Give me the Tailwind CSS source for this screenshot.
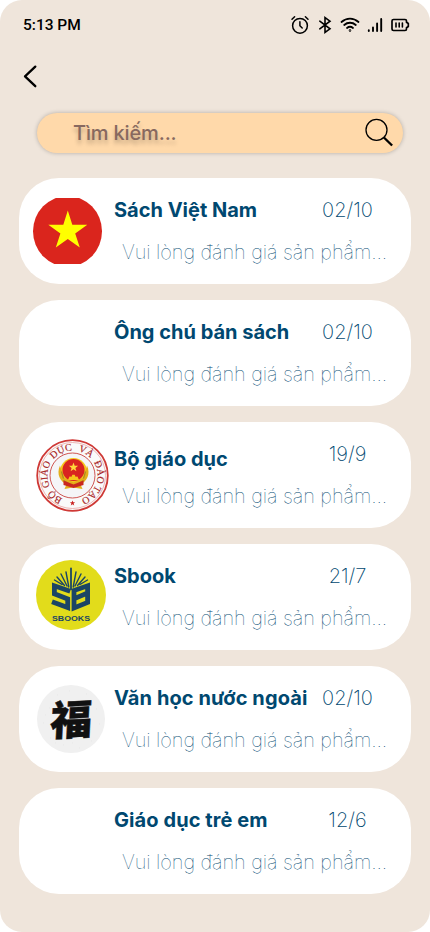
<!DOCTYPE html>
<html lang="vi">
<head>
<meta charset="utf-8">
<meta name="viewport" content="width=device-width, initial-scale=1">
<title>Tin nhắn</title>
<script src="https://cdn.jsdelivr.net/npm/@tailwindcss/browser@4"></script>
</head>
<body class="bg-white">
<main class="flex h-[932px] w-[430px] flex-col overflow-hidden rounded-[22px] bg-[#efe5db] font-['Inter',sans-serif]">
  <header class="flex h-[49px] shrink-0 items-center justify-between pl-[23px] pr-[20px]">
    <span class="font-['Roboto',sans-serif] text-[15.5px] font-medium leading-5 text-black">5:13 PM</span>
    <div class="flex items-center gap-[5px]">
      <svg class="h-5 w-5" viewBox="0 0 20 20" fill="none" stroke="#000" stroke-width="1.5" stroke-linecap="round" stroke-linejoin="round"><circle cx="10" cy="10.8" r="7.4"/><path d="M9.9 6.8v4l2.3 2.2M2 4.2l2.6-2.5M18 4.2l-2.6-2.5"/></svg>
      <svg class="h-5 w-5" viewBox="0 0 20 20" fill="none" stroke="#000" stroke-width="1.6" stroke-linecap="round" stroke-linejoin="miter"><path d="M4.800 6.200l10.200 7.600-5 3.700V2.500l5 3.700L4.800 13.800"/></svg>
      <svg class="h-5 w-5" viewBox="0 0 20 20" fill="none" stroke="#000" stroke-width="1.8" stroke-linecap="round"><path d="M1.500 7c5-4.500 12-4.500 17 0M4.200 10c3.400-3 8.200-3 11.600 0M7 13c1.800-1.500 4.200-1.500 6 0"/><circle cx="10" cy="15.500" r=".4"/></svg>
      <svg class="h-5 w-5" viewBox="0 0 20 20" fill="none" stroke="#000" stroke-width="1.900" stroke-linecap="round"><path d="M3.800 15.200v.8M8 12.500v3.500M12.100 8.500v7.500M16.200 4v12"/></svg>
      <svg class="h-5 w-5" viewBox="0 0 20 20" fill="none" stroke="#000" stroke-width="1.7" stroke-linecap="round" stroke-linejoin="round"><path d="M3.500 4.500H15Q16.500 4.500 16.500 6V7.200L18.300 8.500V11.500L16.500 12.800V14Q16.500 15.500 15 15.500H3.500Q2 15.500 2 14V6Q2 4.500 3.500 4.500Z"/><path d="M6 8v4M9.200 8v4M12.400 8v4" stroke-width="1.6"/></svg>
    </div>
  </header>

  <nav class="flex h-[64px] shrink-0 items-start pl-[23px] pt-[15px]">
    <button aria-label="Quay lại"><svg class="h-6 w-4" viewBox="0 0 16 24" fill="none" stroke="#000" stroke-width="2.300" stroke-linecap="round" stroke-linejoin="round"><path d="M12.300 2.600L2 12.300L12.300 22.200"/></svg></button>
  </nav>

  <div class="ml-[37px] flex h-10 w-[366px] shrink-0 items-center justify-between rounded-full bg-[#ffd9aa] pl-[36px] pr-[8px] shadow-[0_0_4px_rgba(0,0,0,0.25)]">
    <span class="text-[20px] font-medium leading-6 tracking-[-0.15px] text-[#87695f] [text-shadow:0_4px_4px_rgba(0,0,0,0.25)]">Tìm kiếm...</span>
    <svg class="h-[30px] w-[30px]" viewBox="0 0 30 30" fill="none" stroke="#000"><circle cx="11.500" cy="11.900" r="10.500" stroke-width="1.300"/><path d="M18.900 19.500L27.100 27.500" stroke-width="2.400"/></svg>
  </div>

  <section class="ml-[19px] mt-[25px] flex w-[392px] flex-col gap-4 text-[#004870]">
    <article class="flex h-[106px] rounded-[40px] bg-white">
      <div class="w-[95px] shrink-0 pl-[14px] pt-[20px]">
        <svg class="h-[66px] w-[69px]" viewBox="0 0 69 66"><ellipse cx="34.500" cy="33.300" rx="34.500" ry="35.300" fill="#da251d"/><path d="M34.800 12.500L39.300 26.700H54.300L42.200 35.400L46.800 49.600L34.800 40.900L22.800 49.600L27.400 35.400L15.300 26.700H30.300Z" fill="#ff0"/></svg>
      </div>
      <div class="pt-[20px] text-[20px] leading-6">
        <div class="grid grid-cols-[198px_71px]"><h2 class="whitespace-nowrap font-bold">Sách Việt Nam</h2><time class="text-center font-extralight">02/10</time></div>
        <p class="mt-[18px] whitespace-nowrap pl-2 font-thin tracking-[-0.08px]">Vui lòng đánh giá sản phẩm...</p>
      </div>
    </article>

    <article class="flex h-[106px] rounded-[40px] bg-white">
      <div class="w-[95px] shrink-0"></div>
      <div class="pt-[20px] text-[20px] leading-6">
        <div class="grid grid-cols-[198px_71px]"><h2 class="whitespace-nowrap font-bold">Ông chú bán sách</h2><time class="text-center font-extralight">02/10</time></div>
        <p class="mt-[18px] whitespace-nowrap pl-2 font-thin tracking-[-0.08px]">Vui lòng đánh giá sản phẩm...</p>
      </div>
    </article>

    <article class="flex h-[106px] rounded-[40px] bg-white">
      <div class="w-[95px] shrink-0 pl-[17px] pt-[17px]">
        <svg class="h-[73px] w-[73px]" viewBox="0 0 73 73">
          <circle cx="36.500" cy="36.500" r="35.300" fill="#fafafa" stroke="#cf3936" stroke-width="1.800"/>
          <circle cx="36.500" cy="36.500" r="33" fill="none" stroke="#e79a98" stroke-width=".7"/>
          <circle cx="36.500" cy="36.500" r="22.500" fill="#f5f5f7" stroke="#cf5653" stroke-width="1"/>
          <path id="seal-arc" d="M36.500 61.500A25 25 0 0 1 36.500 11.500A25 25 0 0 1 36.500 61.500" fill="none"/>
          <g fill="#a82424" stroke="#a82424" stroke-width=".15" font-family="'Liberation Serif',serif" font-size="10" text-anchor="middle">
            <text><textPath href="#seal-arc" startOffset="17">BỘ</textPath></text>
            <text><textPath href="#seal-arc" startOffset="40">GIÁO</textPath></text>
            <text><textPath href="#seal-arc" startOffset="67">DỤC</textPath></text>
            <text><textPath href="#seal-arc" startOffset="91">VÀ</textPath></text>
            <text><textPath href="#seal-arc" startOffset="114">ĐÀO</textPath></text>
            <text><textPath href="#seal-arc" startOffset="137">TẠO</textPath></text>
          </g>
          <path d="M36.500 61.500l.7 1.800h1.900l-1.500 1.200.6 1.900-1.700-1.100-1.700 1.100.6-1.900-1.500-1.200h1.900z" fill="#c9211f"/>
          <g transform="translate(.5 -.5)">
          <circle cx="37" cy="33" r="13.500" fill="#f6c51c"/>
          <path d="M23.500 27C19.500 36 24 43 30 46L28 50.500 36.500 49 46 50.500 44 46C50 43 54.500 36 50.500 27L47 39 37 44 27 39Z" fill="#e3ae1b"/>
          <path d="M25 33l2 7M49 33l-2 7M27 42l5 3M47 42l-5 3" stroke="#a98a22" stroke-width="1.200"/>
          <circle cx="37" cy="31.500" r="11" fill="#d92420"/>
          <path d="M27 42l10 4 10-4v4.500l-10 3-10-3z" fill="#c92820"/>
          <path d="M31.500 41.500l1.500-3.500 2 .3.800-2h2.400l.8 2 2-.3 1.500 3.500z" fill="#f6c51c"/>
          <path d="M37 24l1.200 3.300h3.400l-2.700 2.100 1 3.300-2.900-2-2.900 2 1-3.300-2.700-2.100h3.400z" fill="#ffd83b"/>
          </g>
        </svg>
      </div>
      <div class="pt-[20px] text-[20px] leading-6">
        <div class="grid h-6 grid-cols-[198px_71px]"><h2 class="mt-[5px] whitespace-nowrap font-bold">Bộ giáo dục</h2><time class="text-center font-extralight">19/9</time></div>
        <p class="mt-[18px] whitespace-nowrap pl-2 font-thin tracking-[-0.08px]">Vui lòng đánh giá sản phẩm...</p>
      </div>
    </article>

    <article class="flex h-[106px] rounded-[40px] bg-white">
      <div class="w-[95px] shrink-0 pl-[17px] pt-[16px]">
        <svg class="h-[70px] w-[70px]" viewBox="0 0 70 70">
          <circle cx="35" cy="35" r="35" fill="#e2dc1b"/>
          <g fill="none" stroke="#1b4565" stroke-linecap="round">
            <path d="M35 8.500V29" stroke-width="1.800"/>
            <path d="M32.800 27L30 12M37.200 27L40 12M31 26L25 14M39 26L45 14M28.500 25.500L21 17M41.500 25.500L49 17M26 24.500L18.500 20M44 24.500L51.500 20" stroke-width="1.400"/>
          </g>
          <g fill="none" stroke="#1b4565" stroke-width="4.800" stroke-linejoin="miter">
            <path d="M34.200 31.200L18.400 25.800V33.800L31.700 39V47.500L16 41.800"/>
            <path d="M35.800 31.200L51.600 25.800V33L38 38.800V48L51.600 42.500V34.500M38 31V48"/>
          </g>
          <text x="35" y="60.500" text-anchor="middle" textLength="38" lengthAdjust="spacingAndGlyphs" font-family="'Liberation Sans',sans-serif" font-weight="700" font-size="7.500" fill="#1b4565">SBOOKS</text>
        </svg>
      </div>
      <div class="pt-[20px] text-[20px] leading-6">
        <div class="grid grid-cols-[198px_71px]"><h2 class="whitespace-nowrap font-bold">Sbook</h2><time class="text-center font-extralight">21/7</time></div>
        <p class="mt-[18px] whitespace-nowrap pl-2 font-thin tracking-[-0.08px]">Vui lòng đánh giá sản phẩm...</p>
      </div>
    </article>

    <article class="flex h-[106px] rounded-[40px] bg-white">
      <div class="w-[95px] shrink-0 pl-[18px] pt-[19px]">
        <svg class="h-[68px] w-[68px]" viewBox="0 0 68 68">
          <circle cx="34" cy="34" r="34" fill="#f0f0f0"/>
          <path d="M12 23h.5M20 10h.5M32 6h.5M49 9h.5M59 24h.5M62 39h.5M54 56h.5M42 63h.5M26 60h.5M13 53h.5M6 38h.5M8 30h.5M24 17h.5M55 18h.5M18 58h.5M35 58h.5" stroke="#dedede"/>
          <text transform="matrix(1 -.05 -.05 .98 12.500 51)" font-family="'Noto Sans CJK TC',sans-serif" font-weight="900" font-size="42" fill="#111" stroke="#111" stroke-width=".5" stroke-linejoin="round">福</text>
        </svg>
      </div>
      <div class="pt-[20px] text-[20px] leading-6">
        <div class="grid grid-cols-[198px_71px]"><h2 class="whitespace-nowrap font-bold tracking-[0.1px]">Văn học nước ngoài</h2><time class="text-center font-extralight">02/10</time></div>
        <p class="mt-[18px] whitespace-nowrap pl-2 font-thin tracking-[-0.08px]">Vui lòng đánh giá sản phẩm...</p>
      </div>
    </article>

    <article class="flex h-[106px] rounded-[40px] bg-white">
      <div class="w-[95px] shrink-0"></div>
      <div class="pt-[20px] text-[20px] leading-6">
        <div class="grid grid-cols-[198px_71px]"><h2 class="whitespace-nowrap font-bold tracking-[0.08px]">Giáo dục trẻ em</h2><time class="text-center font-extralight">12/6</time></div>
        <p class="mt-[18px] whitespace-nowrap pl-2 font-thin tracking-[-0.08px]">Vui lòng đánh giá sản phẩm...</p>
      </div>
    </article>
  </section>
</main>
</body>
</html>
